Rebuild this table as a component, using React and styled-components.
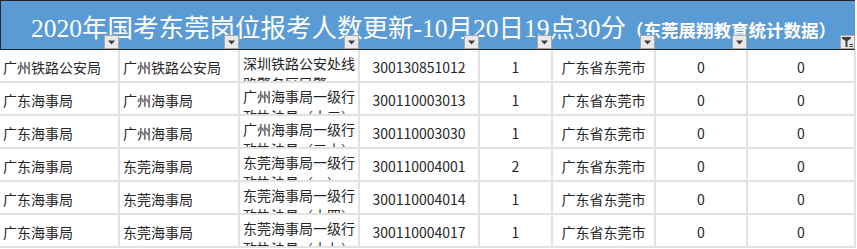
import React from 'react';
import styled, { createGlobalStyle } from 'styled-components';

const GlobalStyle = createGlobalStyle`
	html, body {
		margin: 0;
		padding: 0;
		background: #ffffff;
	}
`;

const columns = '120px 120px 120px 120px 73px 103px 92px 108px';
const headerColumns = '119px 120px 120px 120px 73px 103px 92px 108px';
const gridColor = '#e1e1e1';

const Sheet = styled.div`
	width: 857px;
	height: 249px;
	overflow: hidden;
	font-family: "Noto Sans CJK SC", "Noto Sans", sans-serif;
	color: #262626;
`;

const Header = styled.div`
	width: 855px;
	height: 50px;
	box-sizing: border-box;
	border-top: 1px solid #262626;
	border-left: 1px solid #262626;
	border-bottom: 1px solid #262626;
	background: #5b9bd5;
	display: grid;
	grid-template-columns: ${headerColumns};
	grid-template-rows: 48px;
`;

const Title = styled.div`
	grid-column: 1 / -1;
	grid-row: 1;
	display: flex;
	align-items: baseline;
	padding: 13px 0 0 30px;
	color: #ffffff;
	white-space: nowrap;
`;

const MainTitle = styled.span`
	font-family: "Liberation Serif", "Noto Sans CJK SC", serif;
	font-size: 25.5px;
	line-height: 30px;
`;

const SubTitle = styled.span`
	font-family: "Noto Sans CJK SC", sans-serif;
	font-size: 17.5px;
	font-weight: 700;
`;

const FilterCell = styled.div`
	grid-row: 1;
	grid-column: ${p => p.$col};
	display: flex;
	justify-content: flex-end;
	align-items: flex-end;
	padding-right: 1px;
`;

const FilterButton = styled.div`
	width: 15px;
	height: 14px;
	box-sizing: border-box;
	background: #e9e9e9;
	border: 1px solid #a6a6a6;
	display: flex;
	align-items: center;
	justify-content: center;
`;

const Body = styled.div`
	display: grid;
	grid-template-columns: ${columns};
	grid-auto-rows: 33px;
`;

const Cell = styled.div`
	box-sizing: border-box;
	border-right: 2px solid ${gridColor};
	border-bottom: 2px solid ${gridColor};
	overflow: hidden;
	font-size: 14px;
	line-height: 20px;
	padding: 3px ${p => (p.$align === 'center' ? '0' : '2px')} 0 ${p => (p.$align === 'center' ? '0' : '3px')};
	display: flex;
	align-items: center;
	justify-content: ${p => (p.$align === 'center' ? 'center' : 'flex-start')};
	white-space: nowrap;
`;

const WrapCell = styled.div`
	box-sizing: border-box;
	border-right: 2px solid ${gridColor};
	border-bottom: 2px solid ${gridColor};
	overflow: hidden;
	font-size: 14px;
	line-height: 20px;
	padding: 3px 2px 0 3px;
	word-break: break-all;
`;

const Arrow = () => (
	<svg width="9" height="5" viewBox="0 0 9 5">
		<polygon points="1,0.5 8,0.5 4.5,4.5" fill="#404040" />
	</svg>
);

const Funnel = () => (
	<svg width="13" height="12" viewBox="0 0 13 12">
		<polygon points="1,1 10,1 10,2.5 6.5,5 6.5,11 4.5,11 4.5,5 1,2.5" fill="#404040" />
		<rect x="8.5" y="8" width="3.5" height="1" fill="#404040" />
		<rect x="8.5" y="10" width="3.5" height="1" fill="#404040" />
	</svg>
);

const rows = [
	['广州铁路公安局', '广州铁路公安局', '深圳铁路公安处线路警务区民警', '300130851012', '1', '广东省东莞市', '0', '0'],
	['广东海事局', '广州海事局', '广州海事局一级行政执法员（十三）', '300110003013', '1', '广东省东莞市', '0', '0'],
	['广东海事局', '广州海事局', '广州海事局一级行政执法员（三十）', '300110003030', '1', '广东省东莞市', '0', '0'],
	['广东海事局', '东莞海事局', '东莞海事局一级行政执法员（一）', '300110004001', '2', '广东省东莞市', '0', '0'],
	['广东海事局', '东莞海事局', '东莞海事局一级行政执法员（十四）', '300110004014', '1', '广东省东莞市', '0', '0'],
	['广东海事局', '东莞海事局', '东莞海事局一级行政执法员（十七）', '300110004017', '1', '广东省东莞市', '0', '0'],
];

export default function App() {
	return (
		<>
			<GlobalStyle />
			<Sheet lang="zh-CN">
				<Header>
					<Title>
						<MainTitle>2020年国考东莞岗位报考人数更新-10月20日19点30分</MainTitle>
						<SubTitle>（东莞展翔教育统计数据）</SubTitle>
					</Title>
					{[1, 2, 3, 4, 5, 6, 7, 8].map(col => (
						<FilterCell key={col} $col={col}>
							<FilterButton>{col === 8 ? <Funnel /> : <Arrow />}</FilterButton>
						</FilterCell>
					))}
				</Header>
				<Body>
					{rows.map((row, i) => (
						<React.Fragment key={i}>
							<Cell>{row[0]}</Cell>
							<Cell>{row[1]}</Cell>
							<WrapCell>{row[2]}</WrapCell>
							<Cell $align="center">{row[3]}</Cell>
							<Cell $align="center">{row[4]}</Cell>
							<Cell $align="center">{row[5]}</Cell>
							<Cell $align="center">{row[6]}</Cell>
							<Cell $align="center">{row[7]}</Cell>
						</React.Fragment>
					))}
				</Body>
			</Sheet>
		</>
	);
}
